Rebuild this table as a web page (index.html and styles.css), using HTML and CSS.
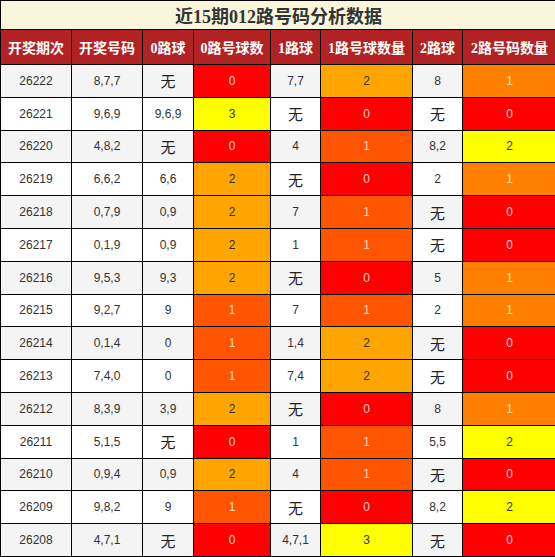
FILE: index.html
```html
<!DOCTYPE html>
<html lang="zh-CN">
<head>
    <meta charset="UTF-8">
    <meta name="viewport" content="width=device-width, initial-scale=1.0">
    <title>近15期012路号码分析数据</title>
    <link rel="stylesheet" href="styles.css">
</head>
<body>
    <table class="data-table">
        <colgroup>
            <col class="w-issue">
            <col class="w-num">
            <col class="w-ball0">
            <col class="w-cnt0">
            <col class="w-ball1">
            <col class="w-cnt1">
            <col class="w-ball2">
            <col class="w-cnt2">
        </colgroup>
        <thead>
            <tr>
                <th colspan="8" class="title">近15期012路号码分析数据</th>
            </tr>
            <tr class="head-row">
                <th>开奖期次</th>
                <th>开奖号码</th>
                <th>0路球</th>
                <th>0路号球数</th>
                <th>1路球</th>
                <th>1路号球数量</th>
                <th>2路球</th>
                <th>2路号码数量</th>
            </tr>
        </thead>
        <tbody>
            <tr><td>26222</td><td>8,7,7</td><td class="none">无</td><td class="c0">0</td><td>7,7</td><td class="c2">2</td><td>8</td><td class="d1">1</td></tr>
            <tr><td>26221</td><td>9,6,9</td><td>9,6,9</td><td class="c3">3</td><td class="none">无</td><td class="c0">0</td><td class="none">无</td><td class="c0">0</td></tr>
            <tr><td>26220</td><td>4,8,2</td><td class="none">无</td><td class="c0">0</td><td>4</td><td class="c1">1</td><td>8,2</td><td class="d2">2</td></tr>
            <tr><td>26219</td><td>6,6,2</td><td>6,6</td><td class="c2">2</td><td class="none">无</td><td class="c0">0</td><td>2</td><td class="d1">1</td></tr>
            <tr><td>26218</td><td>0,7,9</td><td>0,9</td><td class="c2">2</td><td>7</td><td class="c1">1</td><td class="none">无</td><td class="c0">0</td></tr>
            <tr><td>26217</td><td>0,1,9</td><td>0,9</td><td class="c2">2</td><td>1</td><td class="c1">1</td><td class="none">无</td><td class="c0">0</td></tr>
            <tr><td>26216</td><td>9,5,3</td><td>9,3</td><td class="c2">2</td><td class="none">无</td><td class="c0">0</td><td>5</td><td class="d1">1</td></tr>
            <tr><td>26215</td><td>9,2,7</td><td>9</td><td class="c1">1</td><td>7</td><td class="c1">1</td><td>2</td><td class="d1">1</td></tr>
            <tr><td>26214</td><td>0,1,4</td><td>0</td><td class="c1">1</td><td>1,4</td><td class="c2">2</td><td class="none">无</td><td class="c0">0</td></tr>
            <tr><td>26213</td><td>7,4,0</td><td>0</td><td class="c1">1</td><td>7,4</td><td class="c2">2</td><td class="none">无</td><td class="c0">0</td></tr>
            <tr><td>26212</td><td>8,3,9</td><td>3,9</td><td class="c2">2</td><td class="none">无</td><td class="c0">0</td><td>8</td><td class="d1">1</td></tr>
            <tr><td>26211</td><td>5,1,5</td><td class="none">无</td><td class="c0">0</td><td>1</td><td class="c1">1</td><td>5,5</td><td class="d2">2</td></tr>
            <tr><td>26210</td><td>0,9,4</td><td>0,9</td><td class="c2">2</td><td>4</td><td class="c1">1</td><td class="none">无</td><td class="c0">0</td></tr>
            <tr><td>26209</td><td>9,8,2</td><td>9</td><td class="c1">1</td><td class="none">无</td><td class="c0">0</td><td>8,2</td><td class="d2">2</td></tr>
            <tr><td>26208</td><td>4,7,1</td><td class="none">无</td><td class="c0">0</td><td>4,7,1</td><td class="c3">3</td><td class="none">无</td><td class="c0">0</td></tr>
        </tbody>
    </table>
</body>
</html>
```

FILE: styles.css
```css
* {
    margin: 0;
    padding: 0;
    box-sizing: border-box;
}

body {
    font-family: "Liberation Sans", "Noto Sans CJK SC", sans-serif;
    background-color: #fff;
    color: #333;
}

.data-table {
    width: 556px;
    border-collapse: collapse;
    table-layout: fixed;
    text-align: center;
}

.data-table th,
.data-table td {
    border: 1px solid #000;
    padding: 0;
    white-space: nowrap;
}

.w-issue { width: 71px; }
.w-num { width: 71px; }
.w-ball0 { width: 51px; }
.w-cnt0 { width: 77px; }
.w-ball1 { width: 50px; }
.w-cnt1 { width: 92px; }
.w-ball2 { width: 50px; }
.w-cnt2 { width: 94px; }

.title {
    height: 29px;
    background-color: #f9f6dc;
    color: #333;
    font-family: "Liberation Serif", "Noto Sans CJK SC", serif;
    font-size: 18px;
    font-weight: bold;
}

.head-row th {
    height: 35px;
    background-color: #b22222;
    color: #fff;
    font-family: "Liberation Serif", "Noto Sans CJK SC", serif;
    font-size: 14px;
    font-weight: bold;
}

.data-table tbody tr {
    height: 32.8px;
}

.data-table tbody tr:nth-child(odd) {
    background-color: #f4f4f4;
}

.data-table tbody tr:nth-child(even) {
    background-color: #fff;
}

.data-table td {
    font-size: 12px;
    color: #333;
}

.data-table td.none {
    font-family: "Noto Sans CJK SC", sans-serif;
    font-size: 15px;
    color: #222;
}

/* count cells */
.data-table td.c0 { background-color: #ff0000; color: #ffd6d6; }
.data-table td.c1 { background-color: #ff5500; color: #ffd9c4; }
.data-table td.c2 { background-color: #ffa500; color: #333; }
.data-table td.c3 { background-color: #ffff00; color: #333; }
.data-table td.d1 { background-color: #ff8000; color: #ffe0c0; }
.data-table td.d2 { background-color: #ffff00; color: #333; }
```
